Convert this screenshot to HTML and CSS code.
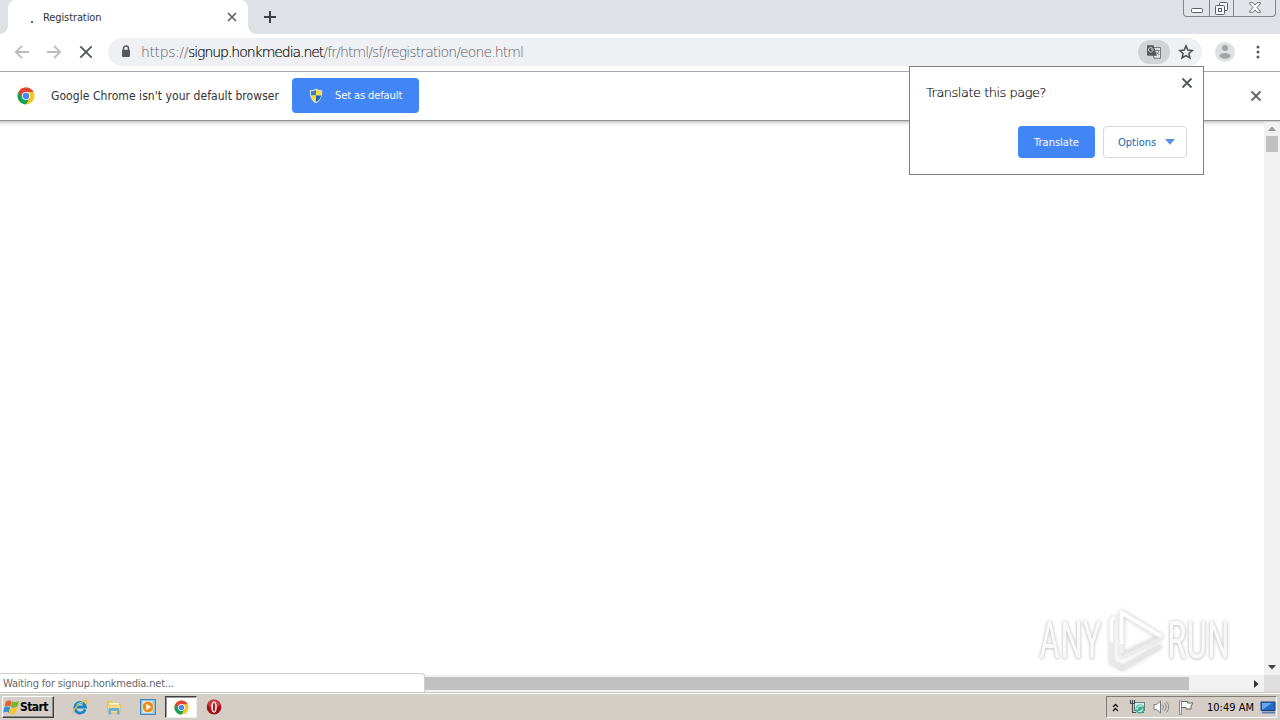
FILE: index.html
```html
<!DOCTYPE html>
<html lang="en">
<head>
<meta charset="utf-8">
<title>Registration</title>
<link rel="stylesheet" href="styles.css">
</head>
<body>
<div class="screen">
  <header class="tabstrip">
    <div class="tab">
      <span class="spinner"></span>
      <span class="tab-title">Registration</span>
      <svg class="tab-close" width="10" height="10" viewBox="0 0 10 10"><path d="M1 1l8 8M9 1l-8 8" stroke="#5f6368" stroke-width="1.7"/></svg>
    </div>
    <svg class="new-tab" width="14" height="14" viewBox="0 0 14 14"><path d="M7 1v12M1 7h12" stroke="#3c4043" stroke-width="2"/></svg>
    <div class="window-controls">
      <span class="wc"><svg width="12" height="5" viewBox="0 0 12 5"><rect x=".5" y=".5" width="11" height="4" rx="1" fill="#fff" stroke="#5b5f6b"/></svg></span>
      <span class="wc wc-mid"><svg width="13" height="13" viewBox="0 0 13 13" fill="#f4f5f7" stroke="#5b5f6b"><rect x="4.500" y=".5" width="8" height="8" rx="1"/><rect x=".5" y="3.500" width="9" height="9" rx="1"/><rect x="3.500" y="6.500" width="3" height="3"/></svg></span>
      <span class="wc wc-close"><svg width="12" height="11" viewBox="0 0 12 11"><path d="M.7 .7H4L6 3 8 .7h3.300v1.200L8 5.500l3.300 3.600v1.200H8L6 8l-2 2.300H.7V9.100L4 5.500.7 1.900z" fill="#fff" stroke="#6b6e78"/></svg></span>
    </div>
  </header>

  <nav class="toolbar">
    <svg class="nav-btn" width="16" height="16" viewBox="0 0 16 16"><path d="M15 8H2M8 1.800L1.800 8 8 14.200" fill="none" stroke="#b9bbbe" stroke-width="1.800"/></svg>
    <svg class="nav-btn" width="16" height="16" viewBox="0 0 16 16"><path d="M1 8h13M8 1.800L14.200 8 8 14.200" fill="none" stroke="#b9bbbe" stroke-width="1.800"/></svg>
    <svg class="nav-btn" width="16" height="16" viewBox="0 0 16 16"><path d="M2.300 2.300l11.400 11.400M13.700 2.300L2.300 13.700" stroke="#54575b" stroke-width="1.900"/></svg>
    <div class="omnibox">
      <svg class="lock" width="10" height="13" viewBox="0 0 10 13"><path d="M2.500 6V3.500a2.500 2.500 0 0 1 5 0V6" fill="none" stroke="#55585c" stroke-width="1.500"/><rect x="1" y="4.800" width="8" height="7.200" rx="1" fill="#55585c"/></svg>
      <span class="url"><span class="u1">https://</span><span class="host">signup.honkmedia.net</span><span class="u2">/fr/html/sf/registration/eone.html</span></span>
      <span class="translate-chip"><svg width="16" height="16" viewBox="0 0 16 16"><path d="M6 3.500h8.500v10.800H8z" fill="#e1e2e3" stroke="#76797d"/><path d="M1 1.300h6.500l3.400 10.500H2a1 1 0 0 1-1-1z" fill="#55585c"/><path d="M7.300 5H4.800M7 5.300A2.300 2.300 0 1 1 6.200 4" fill="none" stroke="#d2d3d5" stroke-width="1"/><path d="M9 6.500h4.500M11.300 5.500v1M12.800 6.500c-.3 2-1.500 3.300-2.800 4.200M10.300 8l3 3" fill="none" stroke="#76797d" stroke-width=".9"/></svg></span>
      <svg class="star" width="16" height="16" viewBox="0 0 16 16"><path d="M8 1.900l1.800 4.200 4.500.4-3.400 3 1 4.500L8 11.600 4.100 14l1-4.500-3.400-3 4.500-.4z" fill="none" stroke="#4a4e54" stroke-width="1.500"/></svg>
    </div>
    <svg class="avatar" width="20" height="20" viewBox="0 0 20 20"><circle cx="10" cy="10" r="10" fill="#dfe0e2"/><circle cx="10" cy="6" r="3" fill="#a2a4a6"/><ellipse cx="10" cy="13.800" rx="5.500" ry="2.900" fill="#a2a4a6"/></svg>
    <svg class="dots" width="4" height="14" viewBox="0 0 4 14" fill="#54575b"><circle cx="2" cy="2" r="1.500"/><circle cx="2" cy="7" r="1.500"/><circle cx="2" cy="12" r="1.500"/></svg>
  </nav>

  <section class="infobar">
    <svg class="chrome-logo" width="18" height="18" viewBox="0 0 18 18"><use href="#chrome"/></svg>
    <span class="info-text">Google Chrome isn't your default browser</span>
    <span class="default-btn">
      <svg width="14" height="16" viewBox="0 0 14 16"><path d="M7 .6C5 2 3 2.300.8 2.200 .5 8.500 2.500 13 7 15.300 11.500 13 13.500 8.500 13.200 2.200 11 2.300 9 2 7 .6z" fill="#d5dfd0"/><path d="M7 2C5.400 3 4 3.300 2 3.300L1.900 7.500H7z" fill="#2f7fce"/><path d="M7 2c1.600 1 3 1.300 5 1.300l.1 4.200H7z" fill="#ffda35"/><path d="M1.900 7.500C2.500 10.500 4 12.600 7 14.100V7.500z" fill="#ffda35"/><path d="M12.100 7.500c-.6 3-2.100 5.100-5.100 6.600V7.500z" fill="#1b65b4"/></svg>
      <span class="default-label">Set as default</span>
    </span>
    <svg class="info-close" width="12" height="12" viewBox="0 0 12 12"><path d="M1.500 1.500l9 9M10.500 1.500l-9 9" stroke="#66696d" stroke-width="1.900"/></svg>
  </section>

  <main class="viewport">
    <div class="page"></div>
    <aside class="vscroll">
      <svg width="8" height="5" viewBox="0 0 8 5"><path d="M0 5l4-4.500L8 5z" fill="#999"/></svg>
      <span class="vthumb"></span>
      <svg class="arrow-down" width="8" height="5" viewBox="0 0 8 5"><path d="M0 0h8L4 4.500z" fill="#444"/></svg>
    </aside>
  </main>
  <div class="bottom-row">
    <div class="status"><span class="status-text">Waiting for signup.honkmedia.net...</span></div>
    <div class="hthumb"></div>
    <svg class="arrow-right" width="5" height="8" viewBox="0 0 5 8"><path d="M0 0v8l4.500-4z" fill="#333"/></svg>
    <div class="corner"></div>
  </div>

  <footer class="taskbar">
    <div class="start">
      <svg width="17" height="16" viewBox="0 0 17 16"><path d="M3 2.500C5 1 7 1.200 8.500 2.200L7.300 7.700C5.500 6.500 3.700 6.600 1.600 7.800z" fill="#e95d29"/><path d="M8.900 2.500c2 1 4.300 1 7.100-.4l-1.600 5.500c-2 1.400-4.400 1.400-6.700.4z" fill="#75b92b"/><path d="M1.400 8.500c2-1.200 3.900-1.300 5.700 0l-1.300 5.200c-1.800-1.400-3.800-1.200-5.800 0z" fill="#3292d8"/><path d="M7.500 8.700c2 1 4.500 1 6.700-.2l-1.500 5.500c-2 1.400-4.400 1.400-6.500.2z" fill="#fbc32b"/></svg>
      <span class="start-label">Start</span>
    </div>
    <div class="quick">
      <span class="q"><svg width="16" height="16" viewBox="0 0 16 16"><path d="M13.200 10.300A5.300 5.300 0 1 1 13.400 8H4.500" fill="none" stroke="#1685d0" stroke-width="2.800"/><path d="M2.300 14.700C-.5 14.200 3 7.500 9 3.500c4.500-3 6.800-2.200 5 1.300" fill="none" stroke="#efbd32" stroke-width="1.300"/><path d="M4.500 5.500C6 3.600 9.500 3.200 11 4.500" fill="none" stroke="#74d0f5" stroke-width="1"/></svg></span>
      <span class="q"><svg width="16" height="16" viewBox="0 0 16 16"><path d="M1 2h5l1 1.500h7V13H1z" fill="#e9c45b"/><path d="M3 4h10v5H3z" fill="#fffbe0"/><path d="M1 6h14l-1 8H2z" fill="#f5dd85" stroke="#d5b253" stroke-width=".6"/><path d="M2.500 15.500V10.500q0-1.500 1.500-1.500h8q1.500 0 1.500 1.500v5H11V12H5v3.500z" fill="#68acd9"/></svg></span>
      <span class="q"><svg width="16" height="16" viewBox="0 0 16 16"><rect x=".5" y=".5" width="15" height="15" fill="#8bc4ed" stroke="#4588c0"/><rect x="2.500" y="2" width="10" height="12" fill="#d9ecf7"/><circle cx="8" cy="8" r="5.700" fill="#f08a13" stroke="#fff1d0" stroke-width=".6"/><path d="M6.300 4.800v6.400L11.200 8z" fill="#fff"/></svg></span>
      <span class="q q-active"><svg width="15" height="15" viewBox="0 0 18 18"><g id="chrome"><circle cx="9" cy="9" r="8.500" fill="#fbc51b"/><path d="M9 9L1.640 4.750A8.500 8.500 0 0 0 9 17.500L12.700 11z" fill="#18a05d"/><path d="M9 9L4.900 10.600 1.640 4.750A8.500 8.500 0 0 1 16.500 5H9z" fill="#df4437"/><circle cx="9" cy="9" r="4.100" fill="#fff"/><circle cx="9" cy="9" r="3.200" fill="#4587f3"/></g></svg></span>
      <span class="q"><svg width="16" height="16" viewBox="0 0 16 16"><ellipse cx="8" cy="8" rx="7.300" ry="7.500" fill="#a80e16"/><ellipse cx="8" cy="5" rx="6" ry="4" fill="#cf3b40"/><ellipse cx="8" cy="8" rx="2.800" ry="5.800" fill="#fff"/><ellipse cx="8" cy="8" rx="1.200" ry="4.600" fill="#b31820"/></svg></span>
    </div>
    <div class="tray">
      <svg class="chev" width="7" height="9" viewBox="0 0 7 9"><path d="M1 4l2.500-2.500L6 4M1 8l2.500-2.500L6 8" fill="none" stroke="#111" stroke-width="1.300"/></svg>
      <svg class="net" width="17" height="16" viewBox="0 0 17 16"><rect x="5.500" y="3.500" width="10" height="8" fill="#d5eee8" stroke="#697f7a"/><path d="M8 13.500h7" stroke="#5c6866"/><path d="M1.500 1v3.500h4V1M3.500 1v3M3.500 5v8.500H7" fill="none" stroke="#4c4c4c" stroke-width="1.200"/><circle cx="11" cy="10" r="4.500" fill="#3caa92"/><path d="M8.500 11a2.800 2.800 0 0 1 4.700-3M13.500 9.500a2.800 2.800 0 0 1-4 2.700" fill="none" stroke="#d9fff4" stroke-width="1.100"/></svg>
      <svg class="speaker" width="17" height="14" viewBox="0 0 17 14"><path d="M1 4.500h2.500L7.500 1v12L3.500 9.500H1z" fill="#fff" stroke="#777"/><path d="M9.500 4.500q2 2.500 0 5M11.500 3q3.300 4 0 8M13.500 1.500q4.500 5.500 0 11" fill="none" stroke="#8a8a8a"/></svg>
      <svg class="flag" width="17" height="15" viewBox="0 0 17 15"><path d="M3.500 1.500h6v1.500h5.500l-2 3v3H8V7.500H3.500z" fill="#fff" stroke="#666"/><path d="M1.500 1v13.500h2V1z" fill="#fff" stroke="#777" stroke-width=".9"/></svg>
      <span class="clock">10:49 AM</span>
      <svg class="monitor" width="16" height="13" viewBox="0 0 16 13"><path d="M1 1h14v8.500H1z" fill="#2268c5" stroke="#183f77"/><path d="M2 2h10L3 8.500H2z" fill="#63a7ea"/><path d="M2 11.500h13" stroke="#5c7daa" stroke-width="2"/></svg>
    </div>
  </footer>

  <div class="bubble">
    <div class="bubble-head">
      <span class="bubble-title">Translate this page?</span>
      <svg class="bubble-close" width="12" height="12" viewBox="0 0 12 12"><path d="M1.500 1.500l9 9M10.500 1.500l-9 9" stroke="#55585c" stroke-width="1.900"/></svg>
    </div>
    <div class="bubble-actions">
      <span class="btn-translate"><span class="translate-label">Translate</span></span>
      <span class="btn-options"><span class="options-label">Options</span><svg width="10" height="6" viewBox="0 0 10 6"><path d="M0 0h10L5 5.800z" fill="#5591e0"/></svg></span>
    </div>
  </div>

  <div class="watermark">
    <span class="wm-word wm-any">ANY</span>
    <svg class="wm-logo" width="62" height="66" viewBox="0 0 62 66" fill="none" stroke-linejoin="round">
      <path d="M11 57l5 3.500L55 38" stroke="#e5e5e5" stroke-width="4"/>
      <path d="M9 9l-3.500 3v43l8 3" stroke="#e9e9e9" stroke-width="3.500"/>
      <path d="M15.500 4.500v43.500L55 29z" stroke="#efefef" stroke-width="4.500"/>
      <path d="M5.500 34V12l3.500-3M15.500 36V4.500L55 28" stroke="#fff" stroke-width="3.500"/>
      <path d="M15.500 47L53 29" stroke="#e5e5e5" stroke-width="3"/>
    </svg>
    <span class="wm-word wm-run">RUN</span>
  </div>
</div>
</body>
</html>
```
FILE: styles.css
```css
* { box-sizing: border-box; }
body { margin: 0; overflow: hidden; font-family: "DejaVu Sans Condensed", "DejaVu Sans", sans-serif; font-stretch: condensed; font-size: 11px; color: #303236; }
svg { display: block; flex: none; }
span { white-space: nowrap; }
.screen { position: relative; width: 1280px; height: 720px; display: flex; flex-direction: column; background: #fff; }

.tabstrip { height: 34px; flex: none; display: flex; background: #dee1e6; padding-left: 8px; }
.tab { position: relative; width: 240px; height: 34px; display: flex; align-items: center; background: #fff; border-radius: 8px 8px 0 0; padding-left: 23px; }
.tab::before, .tab::after { content: ""; position: absolute; bottom: 0; width: 8px; height: 8px; }
.tab::before { left: -8px; background: radial-gradient(circle at 0 0, #dee1e6 7.5px, #fff 8px); }
.tab::after { right: -8px; background: radial-gradient(circle at 100% 0, #dee1e6 7.5px, #fff 8px); }
.spinner { width: 2px; height: 2px; background: #4a5f99; margin-top: 9px; }
.tab-title { margin-left: 10px; letter-spacing: -0.1px; }
.tab-close { margin-left: auto; margin-right: 11px; }
.new-tab { margin: 10px 0 0 15px; }
.window-controls { margin-left: auto; margin-right: 4px; width: 93px; height: 17px; display: flex; border: 1px solid #81858f; border-top: 0; border-radius: 0 0 4px 4px; background: #e2e4e9; }
.wc { width: 25px; display: flex; justify-content: center; align-items: flex-end; padding-bottom: 3px; }
.wc-mid { border-left: 1px solid #81858f; border-right: 1px solid #81858f; padding-bottom: 1px; }
.wc-close { flex: 1; }

.toolbar { height: 38px; flex: none; display: flex; align-items: center; padding: 0 20px 2px 14px; border-bottom: 1px solid #a6a8ab; }
.nav-btn { margin-right: 16px; }
.omnibox { width: 1096px; height: 28px; margin-left: -2px; border-radius: 14px; background: #eef0f3; display: flex; align-items: center; padding-left: 13px; }
.url { margin-left: 10px; width: 384px; font-family: "DejaVu Sans Light", "DejaVu Sans Condensed", sans-serif; font-size: 14px; font-weight: 200; color: #5c6065; }
.u1 { letter-spacing: -0.4px; }
.host { color: #000; letter-spacing: -1.04px; -webkit-text-stroke: .15px #000; }
.u2 { letter-spacing: -0.88px; }
.translate-chip { margin-left: 613px; width: 32px; height: 24px; border-radius: 12px; background: #d1d3d5; display: flex; align-items: center; justify-content: center; }
.star { margin-left: 8px; }
.avatar { margin-left: 13px; }
.dots { margin-left: 21px; }

.infobar { height: 49px; flex: none; display: flex; align-items: center; padding: 0 18px 1px 17px; border-bottom: 1px solid #929292; }
.info-text { margin-left: 16px; width: 241px; font-size: 12px; letter-spacing: .06px; }
.default-btn { width: 127px; height: 35px; border-radius: 4px; background: #4285f4; display: flex; align-items: center; padding-left: 17px; color: #fff; }
.default-label { margin-left: 12px; letter-spacing: -.1px; }
.info-close { margin-left: auto; }

.viewport { flex: 1; min-height: 0; display: flex; }
.page { flex: 1; background: linear-gradient(#c4c4c4 0, #e6e6e6 2px, #f8f8f8 4px, #fff 6px); }
.vscroll { width: 16px; background: #f1f1f1; display: flex; flex-direction: column; align-items: center; padding: 4px 0 5px; border-top: 1px solid #d0d0d0; }
.vthumb { width: 12px; height: 16px; margin-top: 5px; background: #c1c1c1; }
.arrow-down { margin-top: auto; }
.bottom-row { height: 17px; flex: none; display: flex; align-items: center; background: #f1f1f1; }
.status { width: 425px; height: 19px; margin-top: -2px; display: flex; align-items: center; padding-left: 3px; background: #fff; border: 1px solid #cfcfcf; border-left: 0; border-bottom: 0; border-radius: 0 3px 0 0; color: #65686c; letter-spacing: -.18px; }
.hthumb { width: 764px; height: 13px; background: #c1c1c1; }
.arrow-right { margin-left: auto; margin-right: 5px; }
.corner { width: 16px; height: 17px; background: #dedede; }

.taskbar { height: 28px; flex: none; display: flex; align-items: flex-start; background: #d5cec6; border-top: 1px solid #c9c5c0; box-shadow: inset 0 1px #fff; padding: 3px 3px 0 2px; }
.start { width: 52px; height: 22px; display: flex; align-items: center; background: #d5cec6; border: 1px solid; border-color: #fff #404040 #404040 #fff; box-shadow: inset -1px -1px #888; }
.start-label { font-size: 12px; font-weight: bold; color: #000; letter-spacing: -0.55px; }
.quick { display: flex; margin-left: 9px; }
.q { width: 34px; height: 22px; display: flex; align-items: center; justify-content: center; }
.q:nth-child(3) { width: 33px; }
.q-active { width: 32px; margin: 0 1px; background: #fff; border: 1px solid; border-color: #404040 #eee #eee #404040; box-shadow: inset 1px 1px #999; }
.q:last-child { width: 32px; }
.tray { width: 171px; height: 22px; margin-left: auto; display: flex; align-items: center; border: 1px solid; border-color: #807b75 #fff #fff #807b75; padding-left: 5px; }
.net { margin-left: 10px; }
.speaker { margin-left: 7px; }
.flag { margin-left: 8px; }
.clock { margin-left: 12px; width: 54px; color: #000; }

.bubble { position: absolute; left: 909px; top: 66px; width: 295px; height: 109px; background: #fff; border: 1px solid #7f7f7f; padding: 10px 16px 16px; display: flex; flex-direction: column; justify-content: space-between; }
.bubble-head { display: flex; justify-content: space-between; margin-right: -6px; }
.bubble-title { margin-top: 8px; font-size: 13px; letter-spacing: -.5px; font-family: "DejaVu Sans Light", "DejaVu Sans Condensed", sans-serif; color: #000; -webkit-text-stroke: .15px #000; }
.bubble-actions { display: flex; justify-content: flex-end; gap: 8px; }
.btn-translate { width: 77px; height: 32px; display: flex; align-items: center; justify-content: center; border-radius: 4px; background: #4285f4; color: #fff; }
.btn-options { width: 84px; height: 32px; display: flex; align-items: center; justify-content: space-between; border: 1px solid #d5d8dc; border-radius: 4px; padding: 0 11px 0 14px; color: #2065b0; }

.watermark { position: absolute; left: 1039px; top: 608px; display: flex; align-items: center; }
.wm-word { font-family: Roboto, "Liberation Sans", sans-serif; font-size: 51px; line-height: 66px; color: #f9f9f9; text-shadow: 0 0 4px #c4c4c4, 0 1px 3px #d4d4d4; transform-origin: 0 50%; transform: scaleX(.72); }
.wm-any { width: 67px; }
.wm-run { width: 68px; margin-left: -1px; }
.wm-logo { filter: drop-shadow(0 0 2px #c8c8c8); }
```
